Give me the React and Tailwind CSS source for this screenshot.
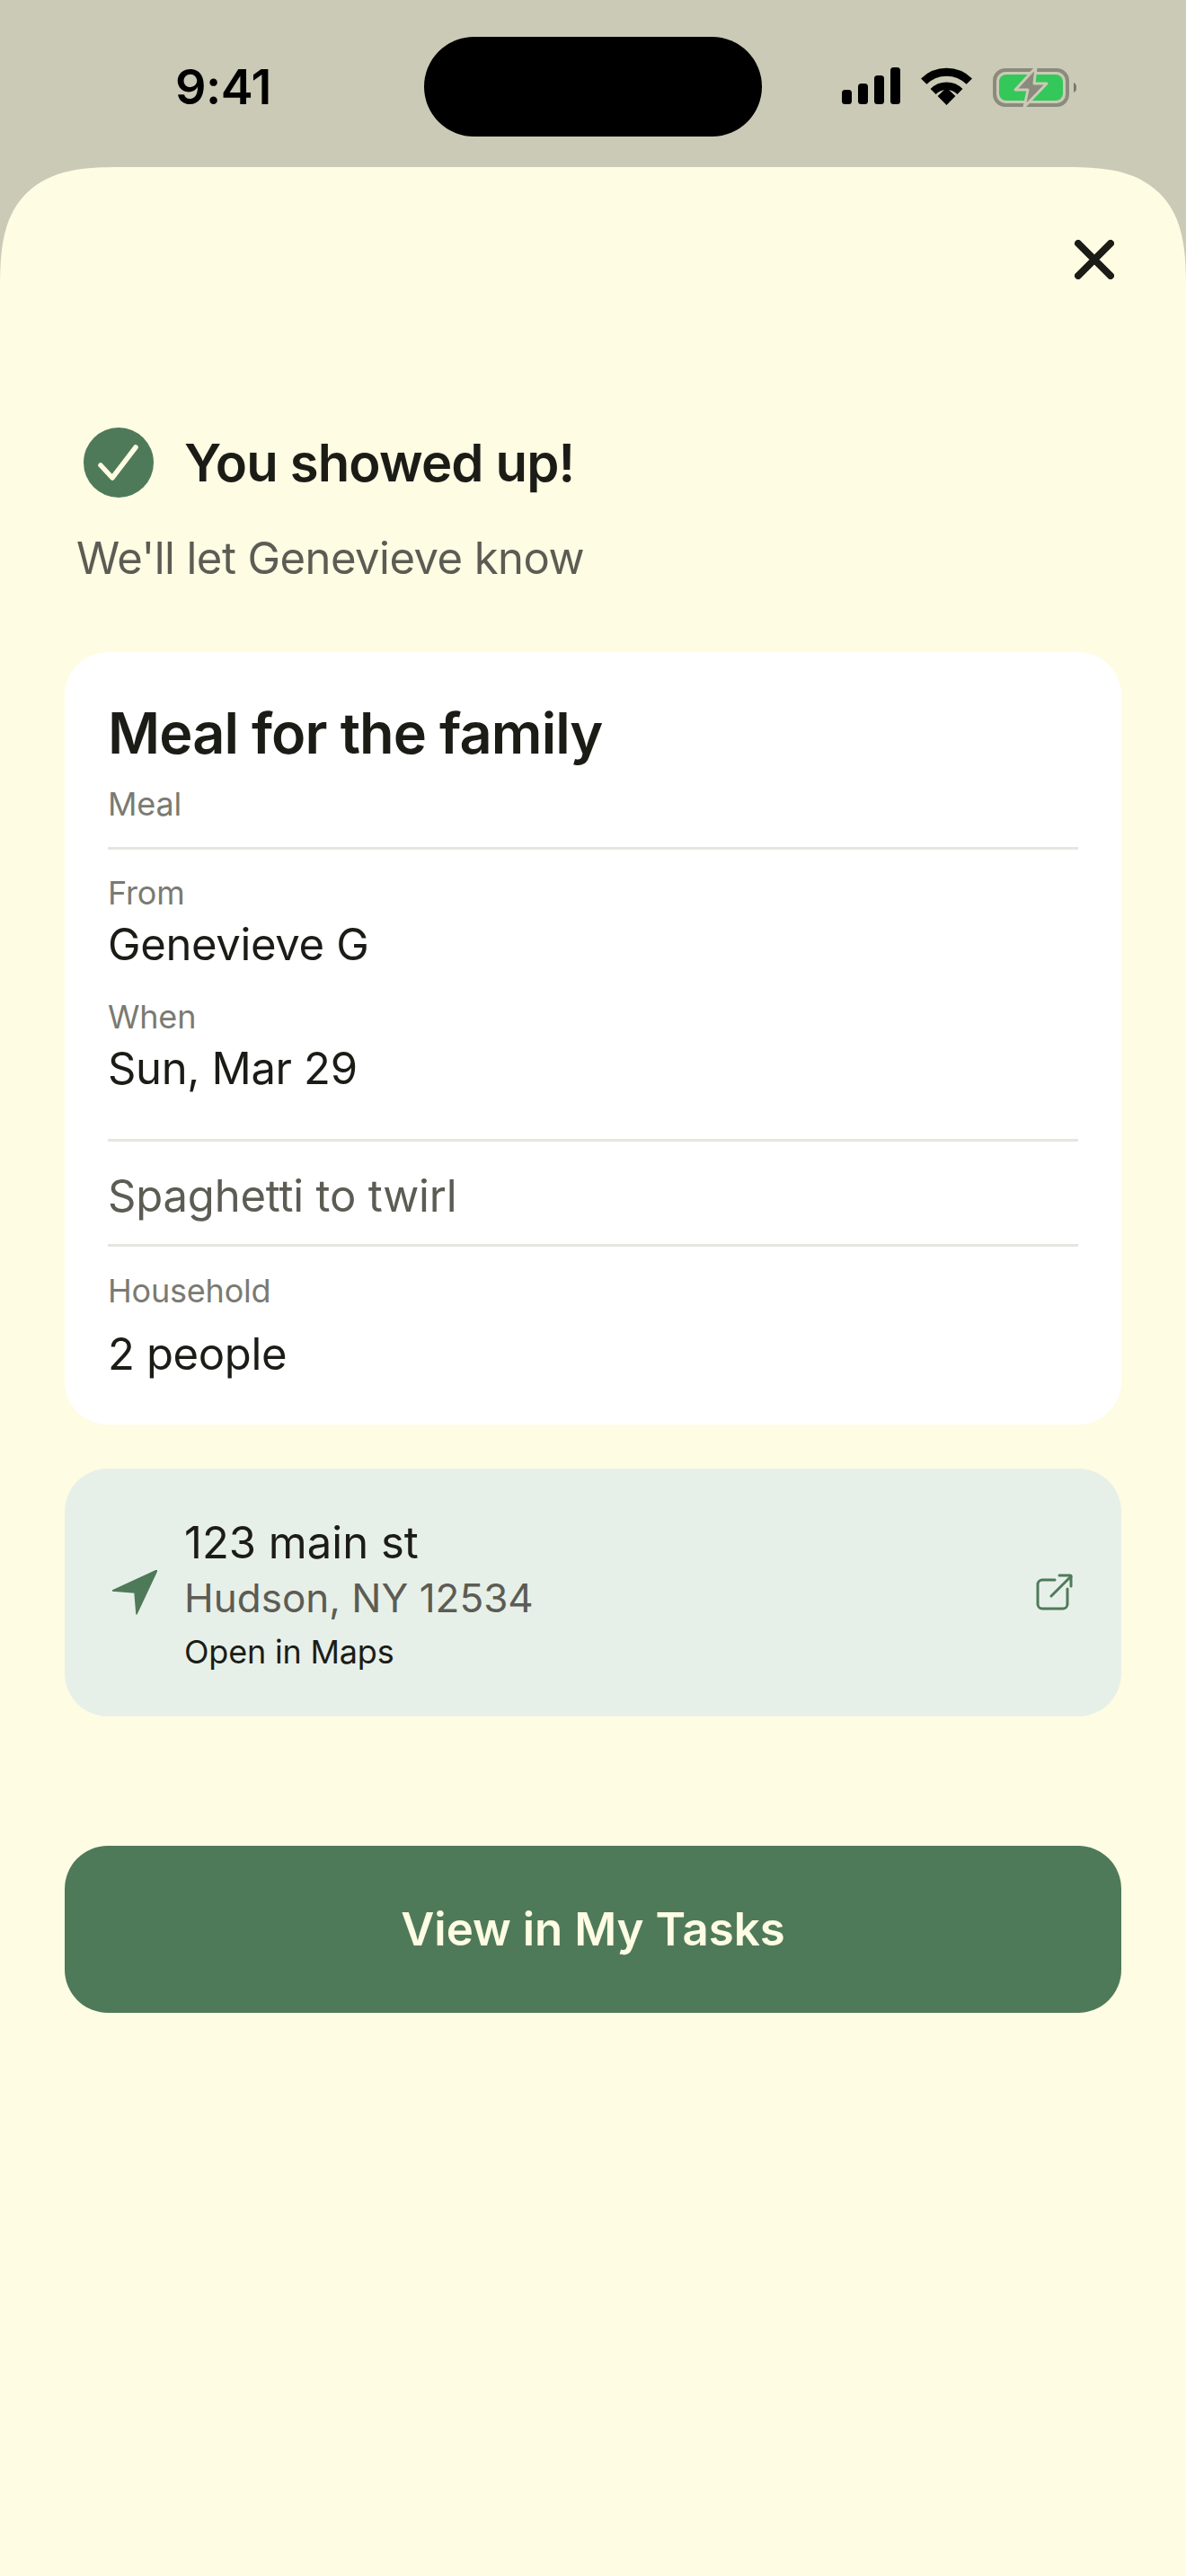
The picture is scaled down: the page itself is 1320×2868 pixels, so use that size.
const font = { fontFamily: 'Inter, sans-serif' };

function SignalIcon() {
    return (
        <svg width="65" height="41" viewBox="0 0 65 41" fill="#000">
            <rect x="0" y="25" width="11" height="16" rx="3.5" />
            <rect x="18" y="18" width="11" height="23" rx="3.5" />
            <rect x="36" y="9" width="11" height="32" rx="3.5" />
            <rect x="54" y="0" width="11" height="41" rx="3.5" />
        </svg>
    );
}

function WifiIcon() {
    return (
        <svg width="57" height="42" viewBox="0 0 57 42" fill="none" stroke="#000">
            <path d="M3.2 15.6 A36 36 0 0 1 53.8 15.6" strokeWidth="9" />
            <path d="M13.6 27 A21 21 0 0 1 43.4 27" strokeWidth="8.5" />
            <path d="M18.6 32 L28.5 22.5 L38.4 32 L28.5 42 Z" fill="#000" stroke="none" />
        </svg>
    );
}

function BatteryIcon() {
    return (
        <svg width="93" height="44" viewBox="0 0 93 44">
            <rect x="2" y="3" width="81" height="39" rx="12" fill="none" stroke="#8b8b7d" strokeWidth="4" />
            <rect x="7" y="8" width="71" height="29" rx="8" fill="#34c759" />
            <path d="M90 17 C92.5 18 93 20 93 22.5 C93 25 92.5 27 90 28 Z" fill="#77776c" />
            <path d="M48 0 L25 25 L39 25 L35 44 L60 18 L46 18 Z" fill="#8b8b7d" stroke="#cbcab6" strokeWidth="3" strokeLinejoin="round" />
        </svg>
    );
}

function CheckBadge() {
    return (
        <div className="flex h-[78px] w-[78px] shrink-0 items-center justify-center rounded-full bg-[#4f7a5a]">
            <svg width="78" height="78" viewBox="0 0 78 78" fill="none">
                <path d="M19 42 L32 56 L58 22" stroke="#fefce3" strokeWidth="5.5" strokeLinecap="round" strokeLinejoin="round" />
            </svg>
        </div>
    );
}

function Divider({ className = '' }) {
    return <div className={`h-[3px] bg-[#e6e6e0] ${className}`} />;
}

function ExternalIcon() {
    return (
        <svg width="42" height="42" viewBox="0 0 42 42" fill="none" stroke="#4f7a5a" strokeWidth="3" strokeLinecap="round" strokeLinejoin="round">
            <path d="M22 7 H8 A5 5 0 0 0 3 12 V34 A5 5 0 0 0 8 39 H31 A5 5 0 0 0 36 34 V17" />
            <path d="M18 25 L40 3" />
            <path d="M27 2 H39 A1 1 0 0 1 40 3 V14" />
        </svg>
    );
}

export default function App() {
    return (
        <div style={font} className="flex h-[2868px] w-[1320px] flex-col overflow-hidden bg-[#cbcab6] text-[#1c1c17]">
            {/* status bar */}
            <div className="flex h-[186px] shrink-0 items-start pl-[195px] pr-[122px]">
                <div className="mt-[64px] w-[277px] text-[54px] font-semibold leading-[66px] tracking-[-0.5px] text-black">9:41</div>
                <div className="mt-[41px] h-[111px] w-[376px] rounded-full bg-black" />
                <div className="ml-[89px] mt-[75px] flex items-start">
                    <SignalIcon />
                    <div className="ml-[23px]"><WifiIcon /></div>
                    <div className="ml-[23px]"><BatteryIcon /></div>
                </div>
            </div>

            {/* sheet */}
            <div className="flex-1 rounded-t-[135px] bg-[#fefce3] px-[72px] [corner-shape:superellipse(1.5)]">
                <div className="flex justify-end pr-[8px] pt-[81px]">
                    <svg width="44" height="44" viewBox="0 0 44 44" fill="none" stroke="#1c1c17" strokeWidth="8" strokeLinecap="round">
                        <path d="M4 4 L40 40 M40 4 L4 40" />
                    </svg>
                </div>

                <div className="mt-[165px] flex items-center gap-[34px] pl-[21px]">
                    <CheckBadge />
                    <h1 className="text-[58px] font-semibold leading-[78px] tracking-[-0.85px]">You showed up!</h1>
                </div>
                <p className="mt-[35px] pl-[13px] text-[49px] leading-[66px] tracking-[-0.55px] text-[#5c5c54]">We'll let Genevieve know</p>

                {/* task card */}
                <div className="mt-[71px] rounded-[48px] bg-white px-[48px] pt-[48px] pb-[48px]">
                    <h2 className="text-[63px] font-semibold leading-[84px] tracking-[-0.9px]">Meal for the family</h2>
                    <p className="mt-[13px] text-[36px] leading-[48px] tracking-[-0.2px] text-[#7a7a72]">Meal</p>
                    <Divider className="mt-[24px]" />

                    <p className="mt-[24px] text-[36px] leading-[48px] tracking-[-0.2px] text-[#7a7a72]">From</p>
                    <p className="mt-[4px] text-[49px] leading-[60px] tracking-[-0.35px]">Genevieve G</p>
                    <p className="mt-[26px] text-[36px] leading-[48px] tracking-[-0.2px] text-[#7a7a72]">When</p>
                    <p className="mt-[4px] text-[49px] leading-[60px] tracking-[-0.35px]">Sun, Mar 29</p>
                    <Divider className="mt-[48px]" />

                    <p className="pt-[31px] pb-[23px] text-[49px] leading-[60px] tracking-[-0.2px] text-[#5c5c54]">Spaghetti to twirl</p>
                    <Divider />

                    <p className="mt-[25px] text-[36px] leading-[48px] tracking-[-0.2px] text-[#7a7a72]">Household</p>
                    <p className="mt-[17px] text-[49px] leading-[60px] tracking-[-0.35px]">2 people</p>
                </div>

                {/* address */}
                <div className="mt-[49px] flex h-[276px] items-center rounded-[48px] bg-[#e7f0e8] pl-[53px] pr-[54px]">
                    <svg width="50" height="50" viewBox="0 0 50 50" fill="#4f7a5a" className="shrink-0">
                        <path d="M50 0 L0 23 L25 25 L27 49 Z" stroke="#4f7a5a" strokeWidth="1.5" strokeLinejoin="round" />
                    </svg>
                    <div className="ml-[30px] flex-1 pt-[3px]">
                        <p className="text-[49px] leading-[63px]">123 main st</p>
                        <p className="text-[44px] leading-[60px] text-[#5c5c54]">Hudson, NY 12534</p>
                        <p className="mt-[6px] text-[36px] leading-[48px] tracking-[-0.2px]">Open in Maps</p>
                    </div>
                    <ExternalIcon />
                </div>

                {/* action */}
                <button className="mt-[144px] flex h-[186px] w-full items-center justify-center rounded-[48px] bg-[#4f7a5a] text-[51px] font-semibold text-[#fefce3]">
                    View in My Tasks
                </button>
            </div>
        </div>
    );
}
